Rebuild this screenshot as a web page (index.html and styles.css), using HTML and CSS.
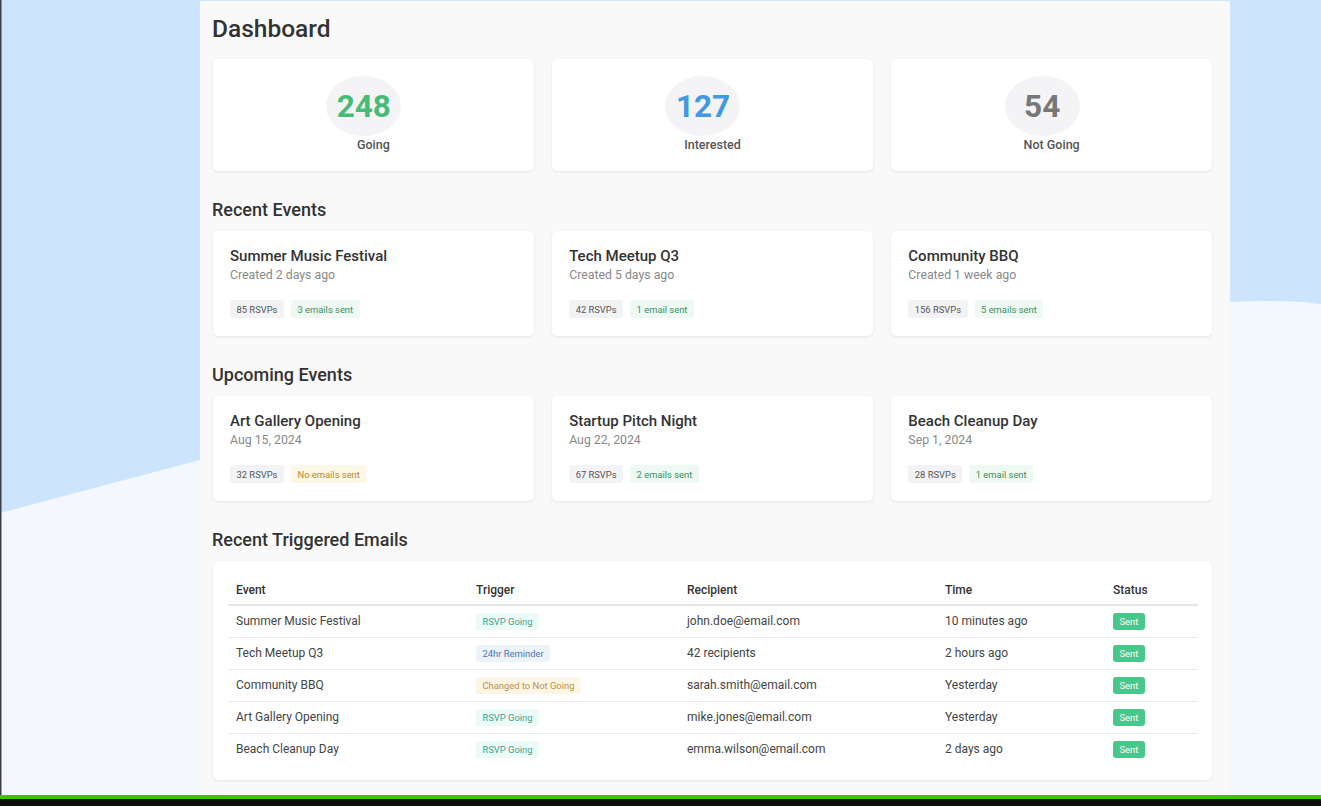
FILE: index.html
```html
<!DOCTYPE html>
<html lang="en">
<head>
<meta charset="utf-8">
<title>Dashboard</title>
<link rel="stylesheet" href="styles.css">
</head>
<body>
<div class="screen">
  <svg class="wallpaper" width="1321" height="795" viewBox="0 0 1321 795" aria-hidden="true">
    <rect x="0" y="0" width="1321" height="795" fill="#cce5fc"/>
    <polygon points="0,513 200,460 200,795 0,795" fill="#f4f8fe"/>
    <path d="M1230,302 Q1280,299 1321,304 L1321,795 L1230,795 Z" fill="#f3f7fe"/>
    <rect x="0" y="0" width="1.5" height="795" fill="#3c3f47"/>
  </svg>
  <main class="panel">
    <h1 class="title">Dashboard</h1>

    <section class="grid3">
      <div class="card stat">
        <div class="stat-num green">248</div>
        <div class="stat-label">Going</div>
      </div>
      <div class="card stat">
        <div class="stat-num blue">127</div>
        <div class="stat-label">Interested</div>
      </div>
      <div class="card stat">
        <div class="stat-num gray">54</div>
        <div class="stat-label">Not Going</div>
      </div>
    </section>

    <h2 class="section-title">Recent Events</h2>
    <section class="grid3">
      <div class="card event">
        <div class="event-name">Summer Music Festival</div>
        <div class="event-meta">Created 2 days ago</div>
        <div class="badges"><span class="badge b-gray">85 RSVPs</span><span class="badge b-green">3 emails sent</span></div>
      </div>
      <div class="card event">
        <div class="event-name">Tech Meetup Q3</div>
        <div class="event-meta">Created 5 days ago</div>
        <div class="badges"><span class="badge b-gray">42 RSVPs</span><span class="badge b-green">1 email sent</span></div>
      </div>
      <div class="card event">
        <div class="event-name">Community BBQ</div>
        <div class="event-meta">Created 1 week ago</div>
        <div class="badges"><span class="badge b-gray">156 RSVPs</span><span class="badge b-green">5 emails sent</span></div>
      </div>
    </section>

    <h2 class="section-title">Upcoming Events</h2>
    <section class="grid3">
      <div class="card event">
        <div class="event-name">Art Gallery Opening</div>
        <div class="event-meta">Aug 15, 2024</div>
        <div class="badges"><span class="badge b-gray">32 RSVPs</span><span class="badge b-yellow">No emails sent</span></div>
      </div>
      <div class="card event">
        <div class="event-name">Startup Pitch Night</div>
        <div class="event-meta">Aug 22, 2024</div>
        <div class="badges"><span class="badge b-gray">67 RSVPs</span><span class="badge b-green">2 emails sent</span></div>
      </div>
      <div class="card event">
        <div class="event-name">Beach Cleanup Day</div>
        <div class="event-meta">Sep 1, 2024</div>
        <div class="badges"><span class="badge b-gray">28 RSVPs</span><span class="badge b-green">1 email sent</span></div>
      </div>
    </section>

    <h2 class="section-title">Recent Triggered Emails</h2>
    <section class="card table-card">
      <table class="emails">
        <colgroup>
          <col class="c-event"><col class="c-trigger"><col class="c-recipient"><col class="c-time"><col class="c-status">
        </colgroup>
        <thead>
          <tr><th>Event</th><th>Trigger</th><th>Recipient</th><th>Time</th><th>Status</th></tr>
        </thead>
        <tbody>
          <tr><td>Summer Music Festival</td><td><span class="tag t-teal">RSVP Going</span></td><td>john.doe@email.com</td><td>10 minutes ago</td><td><span class="sent">Sent</span></td></tr>
          <tr><td>Tech Meetup Q3</td><td><span class="tag t-blue">24hr Reminder</span></td><td>42 recipients</td><td>2 hours ago</td><td><span class="sent">Sent</span></td></tr>
          <tr><td>Community BBQ</td><td><span class="tag t-amber">Changed to Not Going</span></td><td>sarah.smith@email.com</td><td>Yesterday</td><td><span class="sent">Sent</span></td></tr>
          <tr><td>Art Gallery Opening</td><td><span class="tag t-teal">RSVP Going</span></td><td>mike.jones@email.com</td><td>Yesterday</td><td><span class="sent">Sent</span></td></tr>
          <tr><td>Beach Cleanup Day</td><td><span class="tag t-teal">RSVP Going</span></td><td>emma.wilson@email.com</td><td>2 days ago</td><td><span class="sent">Sent</span></td></tr>
        </tbody>
      </table>
    </section>
  </main>
</div>
<div class="taskbar"></div>
</body>
</html>
```

FILE: styles.css
```css
* { box-sizing: border-box; }

html, body {
  margin: 0;
  padding: 0;
  width: 1321px;
  height: 806px;
  overflow: hidden;
  background: #0c0c0c;
  font-family: Roboto, "Liberation Sans", sans-serif;
  color: #333;
}

.screen {
  position: relative;
  height: 795px;
  display: flex;
  padding-top: 1px;
  padding-left: 200px;
}

.wallpaper {
  position: absolute;
  left: 0;
  top: 0;
}

.panel {
  position: relative;
  width: 1030px;
  height: 794px;
  overflow: hidden;
  background: #f9f9fa;
  padding: 13px 18px 0 13px;
}

.taskbar {
  height: 4px;
  background: #44c00a;
}

.title {
  margin: 0 0 15px -1px;
  font-size: 24.5px;
  line-height: 30px;
  font-weight: 500;
  color: #333;
}

.section-title {
  margin: 27px 0 9px -1px;
  font-size: 18px;
  line-height: 24px;
  font-weight: 500;
  color: #333;
}

.grid3 {
  display: grid;
  grid-template-columns: repeat(3, 1fr);
  column-gap: 18.5px;
}

.card {
  background: #fff;
  border-radius: 5px;
  box-shadow: 0 1px 3px rgba(0, 0, 0, 0.08), 0 0 1px rgba(0, 0, 0, 0.04);
}

/* stats */
.stat {
  height: 112px;
  padding-top: 17px;
  display: flex;
  flex-direction: column;
  align-items: center;
}

.stat-num {
  width: 75px;
  height: 60px;
  margin-right: 19px;
  border-radius: 50%;
  background: #f4f3f6;
  display: flex;
  align-items: center;
  justify-content: center;
  font-size: 31.5px;
  font-weight: 700;
}
.stat-num.green { color: #48bb78; }
.stat-num.blue { color: #4299e1; }
.stat-num.gray { color: #777; }

.stat-label {
  font-size: 12.5px;
  line-height: 18px;
  font-weight: 500;
  color: #555;
}

/* events */
.event {
  height: 105px;
  padding: 15px 17px 0 17px;
}

.event-name {
  font-size: 15px;
  line-height: 20px;
  font-weight: 500;
  color: #333;
}

.event-meta {
  font-size: 12.3px;
  line-height: 18px;
  color: #888;
}

.badges {
  display: flex;
  gap: 7px;
  margin-top: 16px;
}

.badge {
  display: inline-flex;
  align-items: center;
  height: 18px;
  padding: 0 6.5px;
  border-radius: 3px;
  font-size: 9.4px;
}
.b-gray { background: #f3f3f5; color: #555; }
.b-green { background: #edf9f2; color: #3b8f5d; }
.b-yellow { background: #fdf7e6; color: #b58a35; }

/* table */
.table-card {
  padding: 10px 15px 15px 15px;
}

.emails {
  width: 970px;
  border-collapse: collapse;
  font-size: 12px;
  color: #444;
}

.c-event { width: 240px; }
.c-trigger { width: 211px; }
.c-recipient { width: 258px; }
.c-time { width: 168px; }
.c-status { width: 93px; }

.emails th {
  text-align: left;
  font-weight: 500;
  color: #333;
  padding: 11px 8px 5px 8px;
  line-height: 17px;
  border-bottom: 2px solid #e6e6e8;
}

.emails tbody tr {
  height: 32px;
}

.emails td {
  padding: 0 8px;
  line-height: 17px;
  border-bottom: 1px solid #ebebed;
  white-space: nowrap;
  vertical-align: middle;
}

.emails tbody tr:last-child td {
  border-bottom: none;
}

.tag,
.sent {
  display: inline-block;
  vertical-align: middle;
  height: 17px;
  line-height: 17px;
  padding: 0 6.5px;
  border-radius: 3px;
  font-size: 9.4px;
}
.t-teal { background: #edfbf8; color: #38a58a; }
.t-blue { background: #edf3fb; color: #4b77ad; }
.t-amber { background: #fdf6e7; color: #c0913f; }

.sent {
  background: #48c78a;
  color: #fff;
}
```
